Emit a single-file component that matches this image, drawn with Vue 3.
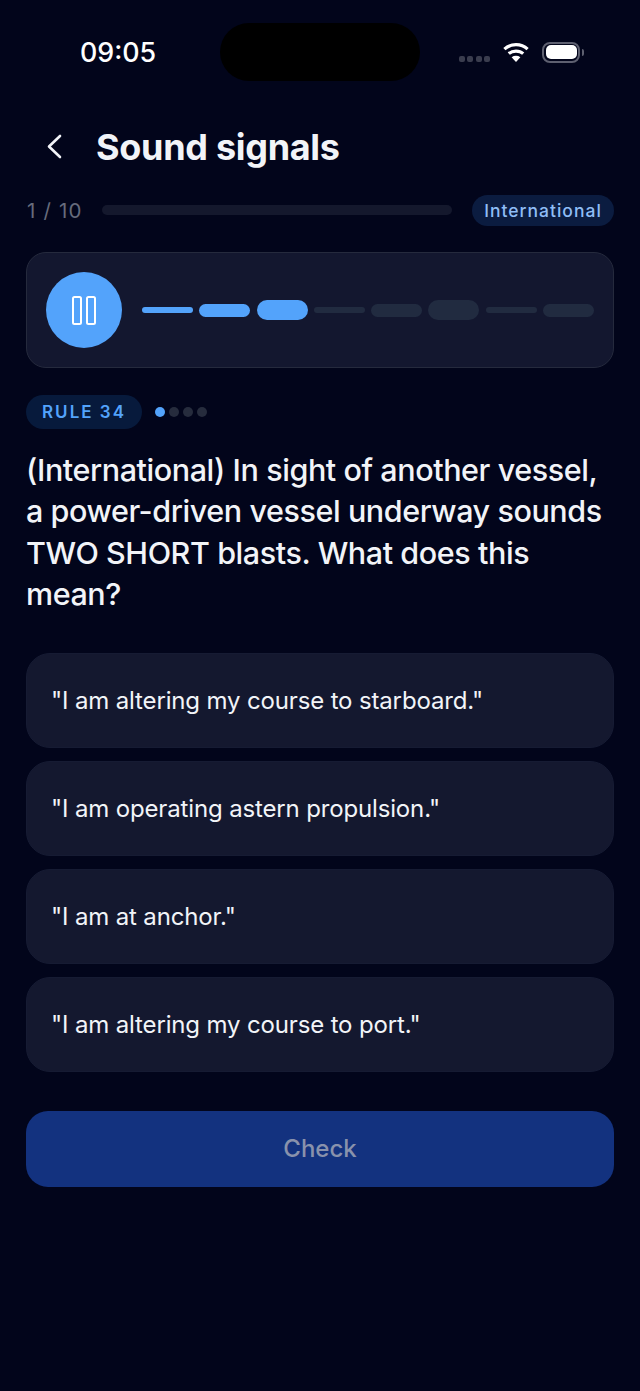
<script setup>
const bars = ['s', 'm', 'l', 's', 'm', 'l', 's', 'm']
const played = 3
const options = [
  '"I am altering my course to starboard."',
  '"I am operating astern propulsion."',
  '"I am at anchor."',
  '"I am altering my course to port."',
]
</script>

<template>
  <main class="screen">
    <header class="status">
      <span class="time">09:05</span>
      <div class="island"></div>
      <div class="status-icons">
        <div class="signal"><i></i><i></i><i></i><i></i></div>
        <svg class="wifi" width="26" height="20" viewBox="0 0 26 20" fill="none" stroke="#fff" stroke-width="3.2">
          <path d="M1.4 7.2C7.8 1.2 18.2 1.2 24.6 7.2" />
          <path d="M5.8 11.6C9.6 8.2 16.4 8.2 20.2 11.6" />
          <path d="M13 20L8.6 15.2C11.2 13.4 14.8 13.4 17.4 15.2Z" fill="#fff" stroke="none" />
        </svg>
        <div class="battery"><div class="battery-fill"></div></div>
        <div class="battery-cap"></div>
      </div>
    </header>

    <div class="title-row">
      <svg class="back" width="15" height="25" viewBox="0 0 15 25" fill="none" stroke="#f2f4f8" stroke-width="2.6" stroke-linecap="round" stroke-linejoin="round">
        <path d="M13 2L2 12.5L13 23" />
      </svg>
      <h1>Sound signals</h1>
    </div>

    <div class="progress-row">
      <span class="count">1 / 10</span>
      <div class="track"></div>
      <span class="region">International</span>
    </div>

    <section class="player">
      <div class="play">
        <span class="pause"></span>
        <span class="pause"></span>
      </div>
      <div class="wave">
        <span
          v-for="(b, i) in bars"
          :key="i"
          class="bar"
          :class="[b, { on: i < played }]"
        ></span>
      </div>
    </section>

    <div class="rule-row">
      <span class="rule">RULE 34</span>
      <div class="dots">
        <i class="active"></i><i></i><i></i><i></i>
      </div>
    </div>

    <p class="question">(International) In sight of another vessel, a power-driven vessel underway sounds TWO SHORT blasts. What does this mean?</p>

    <div class="options">
      <button v-for="o in options" :key="o" class="option">{{ o }}</button>
    </div>

    <button class="check">Check</button>
  </main>
</template>

<style>
html, body { margin: 0; background: #02051b; }
</style>

<style scoped>
.screen {
  width: 640px;
  height: 1391px;
  box-sizing: border-box;
  padding: 0 26px;
  background: #02051b;
  font-family: Inter, "Liberation Sans", sans-serif;
  color: #f2f4f8;
  overflow: hidden;
}
.status {
  position: relative;
  height: 104px;
  display: flex;
  align-items: flex-start;
  justify-content: space-between;
}
.time {
  margin: 36px 0 0 54px;
  font-size: 26.8px;
  line-height: 32px;
  font-weight: 500;
  color: #fff;
}
.island {
  position: absolute;
  left: 194px;
  top: 23px;
  width: 200px;
  height: 58px;
  border-radius: 29px;
  background: #000;
}
.status-icons {
  display: flex;
  align-items: center;
  margin: 40px 30px 0 0;
  height: 24px;
}
.signal { display: flex; gap: 2.3px; margin: 14px 13px 0 -1px; }
.signal i { width: 6px; height: 6px; border-radius: 2px; background: #3a3d4e; }
.wifi { margin-right: 13px; }
.battery {
  width: 38px;
  height: 21px;
  box-sizing: border-box;
  padding: 1.5px;
  border: 2px solid #5e6070;
  border-radius: 8px;
}
.battery-fill { height: 100%; border-radius: 5px; background: #fff; }
.battery-cap { width: 2px; height: 7px; margin-left: 2px; border-radius: 0 2px 2px 0; background: #5e6070; }
.title-row {
  display: flex;
  align-items: center;
  height: 85px;
  padding-left: 21px;
}
.back { margin-right: 34px; }
h1 {
  margin: 0;
  font-size: 36px;
  line-height: 44px;
  font-weight: 650;
  letter-spacing: -0.3px;
}
.progress-row {
  display: flex;
  align-items: center;
  height: 32px;
  margin-top: 5px;
}
.count {
  width: 76px;
  font-size: 20.5px;
  padding-left: 1px;
  box-sizing: border-box;
  color: #666b7c;
  letter-spacing: 1.2px;
}
.track {
  width: 350px;
  height: 10px;
  border-radius: 5px;
  background: #14182d;
}
.region {
  margin-left: 20px;
  width: 142px;
  height: 31px;
  line-height: 31px;
  text-align: center;
  border-radius: 16px;
  background: #0b1c40;
  color: #8fbdf6;
  font-size: 17.5px;
  font-weight: 500;
  letter-spacing: 1px;
}
.player {
  display: flex;
  align-items: center;
  box-sizing: border-box;
  height: 116px;
  margin-top: 26px;
  padding: 0 19px;
  border: 1px solid #252a3d;
  border-radius: 20px;
  background: #13172f;
}
.play {
  flex: none;
  display: flex;
  align-items: center;
  justify-content: center;
  gap: 3.5px;
  width: 76px;
  height: 76px;
  border-radius: 50%;
  background: #53a3fb;
}
.pause {
  width: 10px;
  height: 29px;
  box-sizing: border-box;
  border: 2.4px solid #fff;
  border-radius: 2.5px;
}
.wave {
  flex: 1;
  display: flex;
  align-items: center;
  gap: 6.3px;
  margin-left: 20px;
}
.bar { flex: 1; background: #212b40; }
.bar.on { background: #53a3fb; }
.bar.s { height: 6px; border-radius: 3px; }
.bar.m { height: 13px; border-radius: 6.5px; }
.bar.l { height: 20px; border-radius: 10px; }
.rule-row {
  display: flex;
  align-items: center;
  margin-top: 27px;
}
.rule {
  width: 116px;
  height: 34px;
  line-height: 34px;
  text-align: center;
  border-radius: 17px;
  background: #071a3c;
  color: #53a3fb;
  font-size: 17px;
  font-weight: 600;
  letter-spacing: 2px;
}
.dots { display: flex; gap: 4px; margin-left: 13px; }
.dots i { width: 10px; height: 10px; border-radius: 50%; background: #262c3d; }
.dots i.active { background: #53a3fb; }
.question {
  margin: 20px 0 0;
  font-size: 30.5px;
  line-height: 41.3px;
  font-weight: 500;
  letter-spacing: -0.42px;
  color: #f2f4f8;
}
.options {
  display: flex;
  flex-direction: column;
  gap: 13px;
  margin-top: 39px;
}
.option {
  display: block;
  width: 100%;
  height: 95px;
  padding: 0 24px;
  border: 1px solid #161b33;
  border-radius: 24px;
  background: #14182f;
  text-align: left;
  font-family: inherit;
  font-size: 24px;
  letter-spacing: -0.15px;
  color: #f2f4f8;
}
.check {
  display: block;
  width: 100%;
  height: 76px;
  margin-top: 39px;
  padding: 0 0 2px;
  border: 0;
  border-radius: 22px;
  background: #13327f;
  color: #8992ac;
  font-family: inherit;
  font-size: 24px;
  font-weight: 500;
}
</style>
